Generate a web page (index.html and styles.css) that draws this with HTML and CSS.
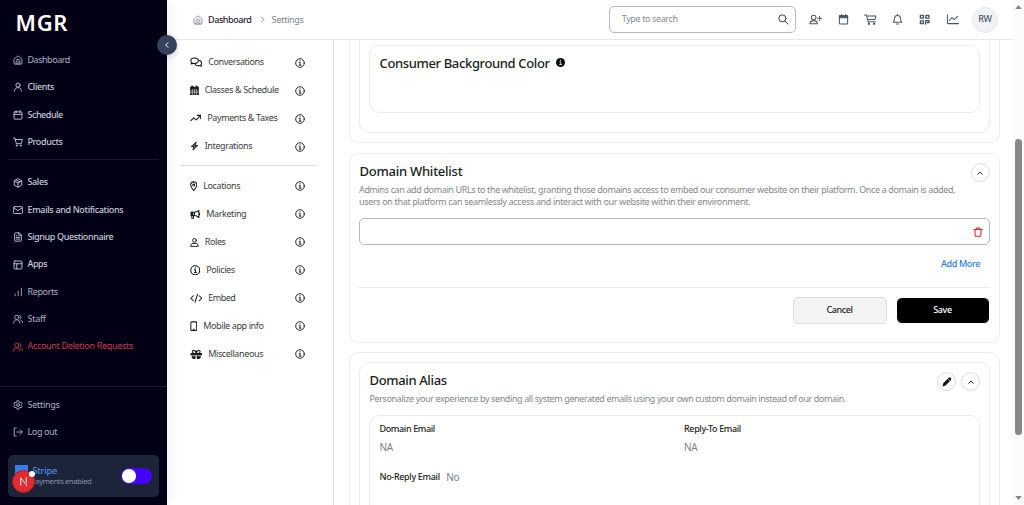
FILE: index.html
```
<!DOCTYPE html>
<html lang="en">
<head>
<meta charset="utf-8">
<title>MGR Settings</title>
<link rel="stylesheet" href="styles.css">
</head>
<body>
<svg class="defs" width="0" height="0">
  <symbol id="home" viewBox="0 0 24 24"><path d="M2.500 10 12 2l9.500 8v10a1.800 1.800 0 0 1-1.800 1.800H4.300A1.800 1.800 0 0 1 2.500 20zM7.500 21.500V15a4.500 4.500 0 0 1 9 0v6.500M12 15v6.500"/></symbol>
  <symbol id="user" viewBox="0 0 24 24"><circle cx="12" cy="7.500" r="5"/><path d="M4 22v-1.500c0-4 3-7 8-7s8 3 8 7V22"/></symbol>
  <symbol id="cal" viewBox="0 0 24 24"><rect x="2.500" y="4.500" width="19" height="17.500" rx="2"/><path d="M2.500 10.500h19M7.500 1.500v5M16.500 1.500v5"/></symbol>
  <symbol id="cart" viewBox="0 0 24 24"><path d="M1 2.500h3.500L8 16h12l2.500-10H5.500"/><circle cx="9" cy="20.500" r="1.500"/><circle cx="18.500" cy="20.500" r="1.500"/></symbol>
  <symbol id="box" viewBox="0 0 24 24"><path d="m12 2 9 5v10l-9 5-9-5V7zM3.500 7.300 12 12l8.500-4.700M12 12v10M7.500 4.600l9 5"/></symbol>
  <symbol id="mail" viewBox="0 0 24 24"><rect x="1.500" y="4" width="21" height="16.500" rx="2"/><path d="m2 7 10 6.500L22 7"/></symbol>
  <symbol id="doc" viewBox="0 0 24 24"><path d="M14 2H6a2 2 0 0 0-2 2v16a2 2 0 0 0 2 2h12a2 2 0 0 0 2-2V8zM14 2v6h6M8 13h8M8 17h8M8 9h2"/></symbol>
  <symbol id="layout" viewBox="0 0 24 24"><rect x="2.500" y="2.500" width="19" height="19" rx="2"/><path d="M2.500 9h19M9 21.500V9"/></symbol>
  <symbol id="bars" viewBox="0 0 24 24"><path d="M20 21V3M12.500 21V10M5 21v-4"/></symbol>
  <symbol id="users" viewBox="0 0 24 24"><circle cx="9" cy="8" r="5"/><path d="M1.500 22c0-5 3-8 7.500-8s7.500 3 7.500 8M16 3.500a5 5 0 0 1 1 9M18.500 14.500c3 1 4.500 4 4.500 6.500"/></symbol>
  <symbol id="gear" viewBox="0 0 24 24"><path d="M10 2h4l.8 3 2.200 1.300 3-.8 2 3.500-2.200 2.200v1.600l2.200 2.200-2 3.500-3-.8-2.200 1.300-.8 3h-4l-.8-3L7 17.700l-3 .8L2 15l2.200-2.200v-1.600L2 9l2-3.500 3 .8L9.200 5z"/><circle cx="12" cy="12" r="3.500"/></symbol>
  <symbol id="logout" viewBox="0 0 24 24"><path d="M8 2.500H3v19h5M9 12h13M17 6.500l5.500 5.500-5.500 5.500"/></symbol>
  <symbol id="info" viewBox="0 0 24 24"><circle cx="12" cy="12" r="10.300"/><path d="M10 11h2.300v5.500M10 17h4.500M12 6.500v1"/></symbol>
  <symbol id="chats" viewBox="0 0 30 24"><path d="M11 2C5.500 2 2 5 2 8.500c0 2 1 3.500 2.200 4.500L2.500 16c2 0 3.500-.500 5-1.500 6.500 1.200 12.500-1.500 12.500-6C20 5 16.500 2 11 2zM22 8c4 .5 6 3 6 6 0 2-.800 3.500-2 4.500l1.500 3c-2 0-3.500-.500-5-1.500-5 1-9-.5-10.500-3.500"/></symbol>
  <symbol id="calgrid" viewBox="0 0 24 24"><path class="fill" d="M5 1h3v3h8V1h3v3h4v4H1V4h4zM1 9.500h22V23H1z"/><path class="cut" d="M1 13.800h22M1 18.500h22M6.500 9.500V23M12 9.500V23M17.500 9.500V23"/></symbol>
  <symbol id="trend" viewBox="0 0 28 24"><path d="m2 18 7-7 6 5L25.500 5.500M18 5h8v8"/></symbol>
  <symbol id="bolt" viewBox="0 0 24 24"><path d="M16 1.500 3 13h6.500L8 22.500 21 10h-7zM13 6l-4 6.500h6L11.500 18"/></symbol>
  <symbol id="pin" viewBox="0 0 18 24"><path d="M9 22.500C6 18 1.500 13.500 1.500 9a7.500 7.500 0 0 1 15 0c0 4.500-4.500 9-7.500 13.500z"/><circle cx="9" cy="9" r="2.300"/></symbol>
  <symbol id="horn" viewBox="0 0 26 24"><path d="M3 7h8c5 0 8-2 11-4.500v18c-3-3-6-5.500-11-5.500H3zM4.500 15v7h4.500l-.5-7M11 7v8M22.500 9c2 .5 2 4.500 0 5"/><path class="fill" d="M3 7h4v8H3z"/></symbol>
  <symbol id="role" viewBox="0 0 24 24"><circle cx="12" cy="7" r="5"/><path d="M2 22c0-4.500 2.500-7 6-7h8c3.500 0 6 2.500 6 7z"/></symbol>
  <symbol id="code" viewBox="0 0 30 24"><path d="m8 6-6 6 6 6M22 6l6 6-6 6M18 2.500l-6 19"/></symbol>
  <symbol id="phone" viewBox="0 0 18 24"><rect x="2" y="1.500" width="14" height="21" rx="2.500"/><path d="M7.500 19h3"/></symbol>
  <symbol id="gift" viewBox="0 0 30 24"><path class="fill" d="M2.500 10h25v4h-25zM5 17h7v5H9c-2 0-4-2-4-5zM17 17h8c0 3-2 5-4 5h-4z"/><path d="M14.500 9C13 4 10 2 7.500 3S5 8 8 9M15.500 9C17 4 20 2 22.500 3S25 8 22 9M15 3v6"/><path class="cut" d="M15 14v9M3 15.500h8M19 15.500h8"/></symbol>
  <symbol id="up" viewBox="0 0 24 24"><path d="m5 16 7-7 7 7"/></symbol>
</svg>

<div class="app">
  <aside class="sidebar">
    <div class="brand">MGR</div>
    <nav class="menu">
      <a class="tight"><svg><use href="#home"/></svg>Dashboard</a>
      <a class="strong"><svg><use href="#user"/></svg>Clients</a>
      <a class="strong tight"><svg><use href="#cal"/></svg>Schedule</a>
      <a class="strong"><svg><use href="#cart"/></svg>Products</a>
    </nav>
    <nav class="menu second">
      <a class="strong"><svg><use href="#box"/></svg>Sales</a>
      <a class="strong wide"><svg><use href="#mail"/></svg>Emails and Notifications</a>
      <a class="strong"><svg><use href="#doc"/></svg>Signup Questionnaire</a>
      <a class="strong tight"><svg><use href="#layout"/></svg>Apps</a>
      <a><svg><use href="#bars"/></svg>Reports</a>
      <a class="loose"><svg><use href="#users"/></svg>Staff</a>
      <a class="danger"><svg><use href="#users"/></svg>Account Deletion Requests</a>
    </nav>
    <nav class="menu foot">
      <a class="loose"><svg><use href="#gear"/></svg>Settings</a>
      <a><svg><use href="#logout"/></svg>Log out</a>
    </nav>
    <div class="stripe">
      <div class="stripe-logo"></div>
      <div class="stripe-text"><b>Stripe</b><span>Payments enabled</span></div>
      <div class="switch"><i></i></div>
      <div class="badge"><svg viewBox="0 0 24 24"><path d="M6 20V4l13 17M18 4v11"/></svg><i></i></div>
    </div>
    <div class="collapse"><svg viewBox="0 0 24 24"><path d="m15 5-7 7 7 7"/></svg></div>
  </aside>

  <div class="page">
    <header class="topbar">
      <div class="crumbs">
        <svg class="crumb-home"><use href="#home"/></svg><b>Dashboard</b>
        <svg class="crumb-sep" viewBox="0 0 24 24"><path d="m8 3 9 9-9 9"/></svg><span>Settings</span>
      </div>
      <div class="search"><span>Type to search</span><svg viewBox="0 0 24 24"><circle cx="10" cy="10" r="8"/><path d="m16 16 7 7"/></svg></div>
      <div class="tools">
        <svg viewBox="0 0 28 24"><circle cx="10" cy="7.500" r="5"/><path d="M2 21.500c0-4 2-6.500 5.500-6.500h5c3.500 0 5.500 2.500 5.500 6.500zM23 5v9M18.500 9.500h9"/></svg>
        <svg viewBox="0 0 28 24"><rect x="5" y="4" width="18" height="18" rx="2"/><path d="M9.500 1v4M18.500 1v4"/><path class="fill" d="M5 4h18v4H5z"/></svg>
        <svg viewBox="0 0 28 24"><path d="M1 2h4l4 15h15M6 4.500h20L23.500 12H8"/><circle class="fill" cx="10.500" cy="21" r="1.500"/><circle class="fill" cx="22" cy="21" r="1.500"/></svg>
        <svg viewBox="0 0 28 24"><path d="M14 1v2M5 18c2-2.500 2.500-4 2.500-8a6.500 6.500 0 0 1 13 0c0 4 .5 5.500 2.500 8zM12 22h4"/></svg>
        <svg class="qr" viewBox="0 0 28 24"><path d="M5 3h6.500v6H5zM17 3h6.500v6H17zM5 15h6.500v6H5zM16.500 22v-7.500h7.500v4h-4"/></svg>
        <svg viewBox="0 0 28 24"><path d="M3 2v17.500c0 1 .5 1.500 1.500 1.500H27M7 14l6-6 4.500 4.500L25 5"/></svg>
        <div class="avatar">RW</div>
      </div>
    </header>

    <div class="body">
      <nav class="settings">
        <div class="group">
          <a><svg class="w12"><use href="#chats"/></svg><span>Conversations</span><svg class="i"><use href="#info"/></svg></a>
          <a><svg class="w9"><use href="#calgrid"/></svg><span>Classes &amp; Schedule</span><svg class="i"><use href="#info"/></svg></a>
          <a><svg class="w11"><use href="#trend"/></svg><span>Payments &amp; Taxes</span><svg class="i"><use href="#info"/></svg></a>
          <a><svg class="w9"><use href="#bolt"/></svg><span>Integrations</span><svg class="i"><use href="#info"/></svg></a>
        </div>
        <div class="group">
          <a><svg class="w7"><use href="#pin"/></svg><span>Locations</span><svg class="i"><use href="#info"/></svg></a>
          <a><svg class="w10"><use href="#horn"/></svg><span>Marketing</span><svg class="i"><use href="#info"/></svg></a>
          <a><svg class="w9"><use href="#role"/></svg><span>Roles</span><svg class="i"><use href="#info"/></svg></a>
          <a><svg class="w10"><use href="#info"/></svg><span>Policies</span><svg class="i"><use href="#info"/></svg></a>
          <a><svg class="w12"><use href="#code"/></svg><span class="tight">Embed</span><svg class="i"><use href="#info"/></svg></a>
          <a><svg class="w7"><use href="#phone"/></svg><span>Mobile app info</span><svg class="i"><use href="#info"/></svg></a>
          <a><svg class="w12"><use href="#gift"/></svg><span>Miscellaneous</span><svg class="i"><use href="#info"/></svg></a>
        </div>
      </nav>

      <main class="content">
        <section class="card colors">
          <div class="card inner">
            <div class="card core"><h2>Consumer Background Color</h2><svg viewBox="0 0 24 24"><circle cx="12" cy="12" r="12"/><path d="M10 10.500h2.500V17M9.500 17.500h5.500M12 5.500v2"/></svg></div>
          </div>
        </section>

        <section class="card whitelist">
          <div class="head">
            <h2 class="wl">Domain Whitelist</h2>
            <div class="round"><svg><use href="#up"/></svg></div>
          </div>
          <p><span>Admins can add domain URLs to the whitelist, granting those domains access to embed our consumer website on their platform. Once a domain is added,</span><br><span class="l2">users on that platform can seamlessly access and interact with our website within their environment.</span></p>
          <div class="field"><svg viewBox="0 0 24 24"><path d="M2 6h20M8 5.500V2.500h8v3M4.500 6l1 16h13l1-16"/></svg></div>
          <a class="more">Add More</a>
          <div class="actions"><div class="btn">Cancel</div><div class="btn dark">Save</div></div>
        </section>

        <section class="card alias">
          <div class="card inner">
            <div class="head">
              <h2>Domain Alias</h2>
              <div class="round"><svg class="pen" viewBox="0 0 24 24"><path d="M1.500 22.500 3 15 15.500 2.500c1.500-1.500 4-1.500 5.500 0s1.500 4 0 5.500L8.500 20.500z"/><path class="cut" d="m14 4.500 5 5"/></svg></div>
              <div class="round"><svg><use href="#up"/></svg></div>
            </div>
            <p>Personalize your experience by sending all system generated emails using your own custom domain instead of our domain.</p>
            <div class="card core">
              <div class="cell"><b>Domain Email</b><span>NA</span></div>
              <div class="cell"><b>Reply-To Email</b><span>NA</span></div>
              <div class="cell row"><b>No-Reply Email</b><span>No</span></div>
            </div>
          </div>
        </section>
      </main>
    </div>
  </div>

  <div class="scroll"><svg viewBox="0 0 10 6"><path d="M0 6 5 0l5 6z"/></svg><i></i><svg viewBox="0 0 10 6"><path d="m0 0 5 6 5-6z"/></svg></div>
</div>
</body>
</html>
```
FILE: styles.css
```
* { box-sizing: border-box; }
body { margin: 0; font: 9px/12.5px "Noto Sans", sans-serif; letter-spacing: -0.38px; color: #222; }
h2, p { margin: 0; }
b { font-weight: 500; }
svg { display: block; flex: none; width: 9.500px; height: 9.500px; fill: none; stroke: currentColor; stroke-width: 2; stroke-linecap: round; stroke-linejoin: round; }
.defs { position: absolute; }
.fill { fill: currentColor; }
.tight { letter-spacing: -0.47px; }
.loose { letter-spacing: -0.27px; }

.app { display: flex; width: 1024px; height: 505px; overflow: hidden; background: #fff; }

/* Sidebar */
.sidebar { position: relative; z-index: 2; flex: none; display: flex; flex-direction: column; width: 167px; background: #020014; color: #a9b3c4; box-shadow: 1px 0 12px rgba(0, 0, 0, .07); }
.brand { height: 46.500px; padding: 8px 0 0 15.500px; color: #fff; font-size: 22px; line-height: 28px; font-weight: 600; letter-spacing: .7px; }
.menu { display: flex; flex-direction: column; padding-left: 12.500px; }
.menu a { display: flex; align-items: center; gap: 5px; height: 27.330px; }
.menu .strong { color: #c3ccda; font-weight: 500; }
.menu .wide { letter-spacing: -0.34px; }
.menu .danger { color: #cb3a4c; letter-spacing: -0.31px; }
.menu svg { stroke-width: 2.200; width: 10px; height: 10px; }
.second { position: relative; margin-top: 3.500px; padding-top: 9.600px; }
.second::before { content: ""; position: absolute; left: 8px; right: 8px; top: 0; height: 1px; background: #181a2c; }
.foot { margin-top: auto; padding-top: 4px; border-top: 1px solid #1b1d2d; }
.stripe { position: relative; display: flex; align-items: center; width: 151px; height: 42.500px; margin: 8.500px 8px 8px; padding: 0 7px; border-radius: 5px; background: #1c2439; }
.stripe-logo { width: 13px; height: 13px; margin-top: -9px; background: #3b7cec; }
.stripe-text { display: flex; flex-direction: column; flex: 1; line-height: 11px; margin-left: 3px; }
.stripe-text b { margin-left: 1.500px; color: #4c8bf0; font-size: 9.300px; letter-spacing: -0.3px; }
.stripe-text span { color: #8592a8; font-size: 7.700px; letter-spacing: -0.40px; white-space: nowrap; }
.switch { width: 31px; height: 15.500px; padding: 1px; border-radius: 8px; background: #4305f5; }
.switch i { display: block; width: 13.500px; height: 13.500px; border-radius: 50%; background: #fff; }
.badge { position: absolute; left: 4px; top: 15px; display: grid; place-items: center; width: 23px; height: 23px; border-radius: 50%; background: #e02b30; border: 1px solid #b01c26; color: #fff; }
.badge svg { width: 11px; height: 11px; }
.badge i { position: absolute; right: -1px; top: 0; width: 6px; height: 6px; border-radius: 50%; background: #fff; }
.collapse { position: absolute; left: 157px; top: 34.500px; display: grid; place-items: center; width: 20px; height: 20px; border-radius: 50%; background: #33415c; color: #fff; box-shadow: 0 2px 6px rgba(0, 0, 0, .2); }
.collapse svg { width: 8px; height: 8px; stroke-width: 3; }

/* Top bar */
.page { flex: 1; display: flex; flex-direction: column; min-width: 0; }
.topbar { flex: none; display: flex; align-items: center; justify-content: space-between; height: 40px; padding: 0 15px 0 26px; border-bottom: 1px solid #e5e7eb; }
.crumbs { display: flex; align-items: center; padding-top: .600px; color: #7c818c; }
.crumbs b { width: 53px; margin-left: 5px; color: #1f2329; letter-spacing: -0.42px; }
.crumb-home { width: 10px; height: 10px; }
.crumb-sep { width: 7px; height: 7px; margin: 0 5.500px 0 -2px; stroke-width: 3; }
.crumbs span { letter-spacing: -0.28px; }
.search { display: flex; align-items: center; justify-content: space-between; width: 187px; height: 27px; margin-left: auto; padding: 0 6px 0 12px; border: 1px solid #b6bbc6; border-radius: 5px; color: #858b96; }
.search svg { width: 10.500px; height: 10.500px; color: #25282d; }
.tools { display: flex; align-items: center; gap: 14.300px; margin-left: 13.500px; color: #4b5563; }
.tools svg { width: 13px; height: 11px; stroke-width: 2.200; }
.tools .qr { stroke-width: 3; }
.avatar { display: grid; place-items: center; width: 26px; height: 26px; margin-left: -1px; border: 1px solid #e7e9ee; border-radius: 50%; background: #f1f2f5; font-weight: 500; }

/* Settings navigation */
.body { flex: 1; display: flex; min-height: 0; }
.settings { flex: none; width: 167px; padding: 8.500px 15.500px 0 13px; border-right: 1px solid #dcdfe3; color: #3b3d42; }
.group + .group { margin-top: 5px; padding-top: 6px; border-top: 1px solid #d9dcdf; }
.group:first-child { margin-bottom: -.5px; }
.settings a { display: flex; align-items: center; height: 28px; padding: 0 12.500px 0 9.500px; }
.settings span { flex: 1; margin-left: 6.200px; }
.settings svg { height: 10.500px; color: #17181a; stroke-width: 2.500; }
.settings .i { width: 10px; height: 10px; stroke-width: 2.200; }
.w12 { width: 12.500px; }
.w11 { width: 11.500px; }
.w10 { width: 10.500px; }
.w9 { width: 9px; }
.w7 { width: 7.500px; }
.cut { stroke: #fff; stroke-width: 1.300; }

/* Cards */
.content { flex: 1; min-width: 0; overflow: hidden; padding: 0 13px 0 15px; }
.card { border: 1px solid #ebecee; border-radius: 10px; }
h2 { font-size: 13px; line-height: 18px; font-weight: 500; letter-spacing: -0.36px; color: #1b1d20; }
.wl { letter-spacing: -0.25px; }
p { color: #85878b; letter-spacing: -0.37px; white-space: nowrap; }
.l2 { letter-spacing: -0.345px; }
.colors { height: 113px; margin-top: -10px; padding: 0 9px; }
.colors, .colors .inner { border-top: 0; border-top-left-radius: 0; border-top-right-radius: 0; }
.colors .inner { height: 103px; padding: 15px 9px 0; }
.colors .core { display: flex; gap: 6.500px; height: 68px; padding: 8px 9.500px; }
.colors svg { width: 9px; height: 9px; margin-top: 4px; color: #fff; }
.colors circle { fill: #0a0a0a; stroke: none; }
.head { display: flex; align-items: center; gap: 5px; height: 19px; }
.head h2 { flex: 1; position: relative; top: -1.500px; left: .5px; }
.round { display: grid; place-items: center; width: 19px; height: 19px; border: 1px solid #d9dce1; border-radius: 50%; color: #333; }
.round svg { width: 8px; height: 8px; stroke-width: 3; }
.round .pen { width: 10px; height: 10px; color: #111; fill: currentColor; stroke: none; }
.whitelist { height: 190px; margin-top: 10px; padding: 9px 9.500px 0 9px; }
.whitelist p { margin-top: 1.500px; }
.field { display: flex; align-items: center; justify-content: flex-end; height: 27px; margin-top: 9.500px; padding-right: 5.500px; border: 1px solid #b5bac4; border-radius: 5px; color: #dc2626; }
.field svg { width: 10px; height: 10px; stroke-width: 2.500; }
.more { display: block; margin: 13px 9.500px 0 0; color: #2a7ddb; text-align: right; font-weight: 500; }
.actions { display: flex; justify-content: flex-end; gap: 9px; margin-top: 16px; padding-top: 9px; border-top: 1px solid #e6e8eb; }
.btn { display: grid; place-items: center; width: 94px; height: 27px; border: 1px solid #dadde3; border-radius: 5px; background: #f4f4f4; font-weight: 500; color: #1b1d20; }
.dark { background: #000; color: #fff; border-color: #fff; border-radius: 6px; }
.alias { height: 220px; margin-top: 9px; padding: 9px 9px 0; }
.alias .inner { height: 220px; padding: 9px 9px 0; }
.alias p { margin: 2px 0 0 .5px; letter-spacing: -0.386px; }
.alias .core { display: grid; grid-template-columns: 304.500px 1fr; grid-template-rows: 48px 20px; height: 150px; margin-top: 9.500px; padding: 7px 9.500px; }
.cell { display: flex; flex-direction: column; gap: 5px; color: #1b1d20; }
.cell b { letter-spacing: -0.36px; }
.cell span { font-size: 10px; color: #7b818c; letter-spacing: -0.3px; }
.row { flex-direction: row; gap: 6.500px; }
.row b { letter-spacing: -0.33px; }

/* Scrollbar */
.scroll { flex: none; display: flex; flex-direction: column; align-items: center; padding: 5px 0; width: 11px; background: #fbfbfb; }
.scroll svg { width: 7px; height: 4px; fill: #858585; stroke: none; }
.scroll i { width: 7px; height: 296px; margin: 130px 0 auto; border-radius: 4px; background: #888; }
```
